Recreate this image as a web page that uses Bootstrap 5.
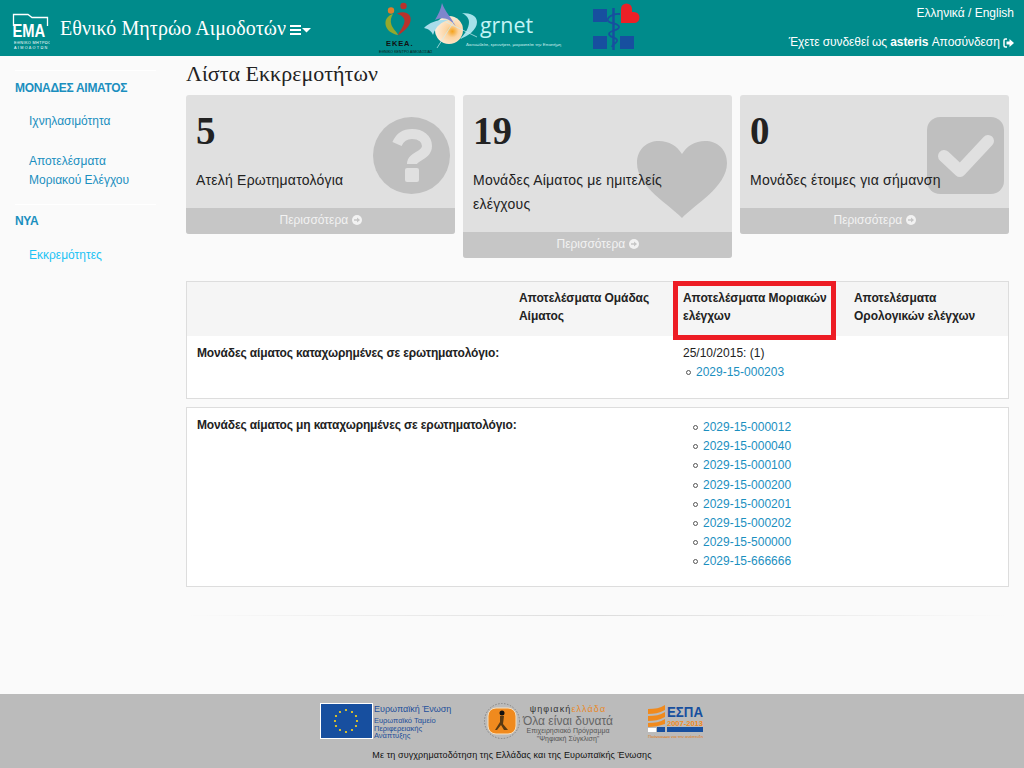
<!DOCTYPE html>
<html lang="el"><head><meta charset="utf-8"><title>Λίστα Εκκρεμοτήτων</title>
<link rel="stylesheet" href="https://cdn.jsdelivr.net/npm/bootstrap@5.3.0/dist/css/bootstrap.min.css">
<style>
html,body{height:100%}
body{background:#fafafa;font-family:"Liberation Sans",Arial,sans-serif;font-size:12px;color:#222;line-height:19px;width:1024px;height:768px;overflow:hidden}
a{text-decoration:none;color:#1b8fbf}
.topbar{height:56px;background:#008b8b;color:#fff}
.brand-area{width:372px;padding-left:12px}
.ema-logo{flex:none;display:block;margin-top:10px}
.brand-title{font-family:"Liberation Serif",serif;font-size:20px;line-height:24px;margin-left:10px;margin-top:16px;color:#fff;letter-spacing:.08px;height:24px}
.brand-caret{margin-left:4px;margin-top:3px}
.logo-area{width:268px}
.top-right{flex:1;padding:6px 10px 0 0;text-align:right;color:#fff;font-size:12px;line-height:15px}
.top-right a{color:#fff}
.top-line2{margin-top:14px;letter-spacing:-.08px}
.wrap{height:638px}
.side{width:186px;flex:none;padding:14px 30px 0 15px}
.side hr{margin:0;border:0;border-top:1px solid #fff;opacity:1}
.side-head{font-weight:700;color:#1b8fbf;line-height:18px;margin-top:8px;letter-spacing:-.3px}
.side-head-two{margin-top:7px}
.side-link{display:block;padding-left:14px;line-height:19px}
.side-link-a{margin-top:15px}
.side-link-b{margin-top:21px}
.side-link-c{margin-top:16px}
.side-link.now{color:#1cc3f5}
.side hr.side-rule{margin-top:14px}
.main-area{width:823px;flex:none}
.page-title{font-family:"Liberation Serif",serif;font-size:22px;line-height:26px;margin:5px 0 8px;font-weight:400;color:#222}
.stat{background:#e0e0e0;border-radius:3px;width:269px;overflow:hidden;position:relative}
.stat-body{padding:9px 10px 16px;position:relative}
.stat-num{font-family:"Liberation Serif",serif;font-weight:700;font-size:39px;line-height:54px;color:#222;margin-bottom:10px}
.stat-text{font-size:14px;line-height:24px;color:#222;position:relative;width:215px;letter-spacing:.22px}
.stat-foot{display:block;background:#c6c6c6;color:#f2f2f2;text-align:center;height:26px;line-height:25px;position:relative}
.stat-ico{position:absolute;right:5px;top:22px;width:77px;height:77px}
.ico-heart{top:46px;width:90px}
.more-ico{vertical-align:-1px}
.box{background:#fff;border:1px solid #ddd}
.box-one{margin-top:23px;height:118px}
.box-two{margin-top:8px;height:180px}
.cells{display:grid;grid-template-columns:321px 165px 170px 1fr}
.headcells{background:#f5f5f5;height:54px;font-weight:700;line-height:18px;letter-spacing:-.06px}
.headcells>div{padding:7px 8px 0 11px}
.headcells>div:nth-child(3){position:relative;padding-left:10px}
.redbox{position:absolute;left:0;top:-1px;width:163px;height:59px;border:5px solid #ed1c24}
.rowcells{padding-top:8px}
.rowcells>div{padding-left:10px}
.rowcells>div:first-child{font-weight:700;white-space:nowrap;letter-spacing:-.14px}
.codes{list-style:none;margin:0;padding:0}
.codes-wide{padding-left:7px;margin-top:2px}
.codes li{line-height:19.2px}
.codes li::before{content:"";display:inline-block;width:5px;height:5px;border:1px solid #555;border-radius:50%;margin:0 5px 1px 3px}
.grad-line{height:1px;margin-top:28px;background:linear-gradient(90deg,#fafafa,#ddd 50%,#fafafa)}
.foot{height:74px;background:#bbb}
.foot-logos{height:56px;padding-top:9px}
.foot-svg{flex:none;display:block}
.flag-svg{margin-right:1px}
.dgt-svg{margin-left:19px}
.espa-svg{margin-left:31px;margin-top:-1px}
.foot-note{font-size:9px;line-height:12px;color:#111;text-align:center;margin-top:-1px;letter-spacing:.1px}
.eu-text{font-size:7.5px;line-height:7.700px;color:#1e4f9a;width:90px;white-space:nowrap}
.eu-text b{font-size:9px;font-weight:400;display:block;margin-bottom:3px;line-height:10px;margin-top:1px}
.digital{text-align:center;color:#555;width:94px;white-space:nowrap}
.digital .dg1{font-size:9px;color:#333;letter-spacing:1.1px;line-height:12px}
.digital .dg1 i{color:#e8892a;font-style:normal}
.digital .dg2{font-size:12px;line-height:12px;color:#666}
.digital .dg3{font-size:7px;line-height:8px}
</style></head><body>
<header class="topbar d-flex">
  <div class="brand-area d-flex align-items-start">
    <svg class="ema-logo" width="38" height="40" viewBox="12 10 38 40"><path d="M13.500 26V14.500H28l4 3h15.500V26" fill="none" stroke="#fff" stroke-width="1.300"/><text transform="translate(12.500 37) scale(.82 1)" font-family="Liberation Sans" font-weight="700" font-size="18" fill="#fff">EMA</text><text x="14" y="44" font-family="Liberation Sans" font-size="3.800" fill="#fff" letter-spacing=".4">ΕΘΝΙΚΟ ΜΗΤΡΩΟ</text><text x="14" y="48.500" font-family="Liberation Sans" font-size="3.800" fill="#fff" letter-spacing="1.300">ΑΙΜΟΔΟΤΩΝ</text></svg>
    <div class="brand-title d-flex align-items-center">Εθνικό Μητρώο Αιμοδοτών
      <svg class="brand-caret" width="21" height="10" viewBox="0 0 21 10"><path d="M0 0h11v2H0zM0 4h11v2H0zM0 8h11v2H0z" fill="#fff"/><path d="M12 3h9l-4.500 4.500z" fill="#fff"/></svg>
    </div>
  </div>
  <div class="logo-area">
    <svg class="d-block" width="268" height="56" viewBox="372 0 268 56">
      <circle cx="403.500" cy="6" r="3.200" fill="#b8322c"/><circle cx="391" cy="10.500" r="3.200" fill="#e07f2a"/>
      <path d="M397 13.500c5-2.500 11-1.500 13 2.500 2 5-1 10-4 13-3 3-6 5-8 6.500 1-4 6-9 6.500-14 .3-4-3-6-7.500-8z" fill="#b8322c"/>
      <path d="M393 14c-4 1-7 4-7.500 8-.5 4 2 8 5 10 3 2 6 3 7.500 3-1-3-5-6-6.500-10-1.500-4-.5-8 1.500-11z" fill="#94a82c"/>
      <text x="386" y="46" font-family="Liberation Sans" font-weight="700" font-size="7.500" fill="#111" letter-spacing=".9">ΕΚΕΑ.</text>
      <text x="379" y="52.500" font-family="Liberation Sans" font-size="3.500" fill="#111" letter-spacing=".1">ΕΘΝΙΚΟ ΚΕΝΤΡΟ ΑΙΜΟΔΟΣΙΑΣ</text>
      <defs><radialGradient id="sun" cx=".62" cy=".55" r=".62"><stop offset="0" stop-color="#f4a21a"/><stop offset=".35" stop-color="#fbd3a0"/><stop offset="1" stop-color="#fdeedd"/></radialGradient></defs>
      <circle cx="449" cy="30" r="14" fill="url(#sun)"/>
      <path d="M442 3c3 9 10 15 14 24-5-8-13-11-21-7 3-5 6-11 7-17z" fill="#7e86cc"/>
      <path d="M424 28c6-6 15-9 25-8-8 2-13 6-16 15-1-3-4-6-9-7z" fill="#a9dcea"/>
      <path d="M462 13c9 0 15 3 15 9 0 8-9 14-17 17 5-5 9-11 9-17 0-4-3-7-7-9z" fill="#a5e2ea"/>
      <path d="M437 48l19-30M446 22l31 15" stroke="#cfeef2" stroke-width=".7"/>
      <text x="480" y="33" font-family="Open Sans,Liberation Sans" font-size="22" fill="#c4f4f6" textLength="53" lengthAdjust="spacingAndGlyphs">grnet</text>
      <text x="466" y="46" font-family="Liberation Sans" font-size="4.300" fill="#d0f0f0">Δικτυωθείτε, ερευνήστε, μοιραστείτε την Επιστήμη</text>
      <path d="M593 9h14v13h-14zM593 36h14v13h-14zM620 36h14v13h-14z" fill="#174f9f"/>
      <path d="M621 23V9a5.500 5.500 0 0 1 11 0v3h2a5.500 5.500 0 0 1 0 11z" fill="#ec2027"/>
      <path d="M613.500 8v42" stroke="#174f9f" stroke-width="2.500"/>
      <path d="M620 14c-7-1-14 4-12 7 2 3 11 2 11 6 0 4-10 3-10 7 0 4 9 3 8 7-1 3-5 3-5 6" fill="none" stroke="#174f9f" stroke-width="1.800"/>
    </svg>
  </div>
  <div class="top-right">
    <div>Ελληνικά / English</div>
    <div class="top-line2">Έχετε συνδεθεί ως <b>asteris</b> <a href="#">Αποσύνδεση
      <svg width="11" height="10" viewBox="0 0 11 10"><path d="M4 1H2.500C1.500 1 1 1.600 1 2.500v5C1 8.400 1.500 9 2.500 9H4" fill="none" stroke="#fff" stroke-width="1.500"/><path d="M3.500 3.500H6.500V1L11 5 6.500 9V6.500H3.500z" fill="#fff"/></svg></a></div>
  </div>
</header>
<div class="wrap d-flex">
  <nav class="side">
    <hr>
    <div class="side-head">ΜΟΝΑΔΕΣ ΑΙΜΑΤΟΣ</div>
    <a class="side-link side-link-a" href="#">Ιχνηλασιμότητα</a>
    <a class="side-link side-link-b" href="#">Αποτελέσματα<br>Μοριακού Ελέγχου</a>
    <hr class="side-rule">
    <div class="side-head side-head-two">ΝΥΑ</div>
    <a class="side-link side-link-c now" href="#">Εκκρεμότητες</a>
  </nav>
  <main class="main-area">
    <h1 class="page-title">Λίστα Εκκρεμοτήτων</h1>
    <div class="d-flex align-items-start gap-2">
      <div class="stat">
        <svg class="stat-ico" viewBox="0 0 77 77"><circle cx="38.500" cy="38.500" r="38.500" fill="#bfbfbf"/><path d="M24 27c3-7 9-10 15-10 9 0 15 5 15 12 0 10-15 10-15 18" fill="none" stroke="#e0e0e0" stroke-width="10" stroke-linejoin="round"/><rect x="32" y="51" width="14" height="14" rx="2" fill="#e0e0e0"/></svg>
        <div class="stat-body"><div class="stat-num">5</div><div class="stat-text">Ατελή Ερωτηματολόγια</div></div>
        <a class="stat-foot" href="#">Περισσότερα <svg class="more-ico" width="10" height="10" viewBox="0 0 10 10"><circle cx="5" cy="5" r="5" fill="#f2f2f2"/><path d="M2 4.200h3V2.500L8 5 5 7.500V5.800H2z" fill="#c6c6c6"/></svg></a>
      </div>
      <div class="stat">
        <svg class="stat-ico ico-heart" viewBox="0 0 90 77"><path d="M45 77C33 64 0 46 0 22 0 8 10 0 22 0c10 0 18 5 23 13C50 5 58 0 68 0c12 0 22 8 22 22 0 24-33 42-45 55z" fill="#bfbfbf"/></svg>
        <div class="stat-body"><div class="stat-num">19</div><div class="stat-text">Μονάδες Αίματος με ημιτελείς ελέγχους</div></div>
        <a class="stat-foot" href="#">Περισσότερα <svg class="more-ico" width="10" height="10" viewBox="0 0 10 10"><circle cx="5" cy="5" r="5" fill="#f2f2f2"/><path d="M2 4.200h3V2.500L8 5 5 7.500V5.800H2z" fill="#c6c6c6"/></svg></a>
      </div>
      <div class="stat">
        <svg class="stat-ico" viewBox="0 0 77 77"><rect width="77" height="77" rx="13" fill="#bfbfbf"/><path d="M17 39l16 15 28-30" fill="none" stroke="#e0e0e0" stroke-width="12" stroke-linejoin="round" stroke-linecap="round"/></svg>
        <div class="stat-body"><div class="stat-num">0</div><div class="stat-text">Μονάδες έτοιμες για σήμανση</div></div>
        <a class="stat-foot" href="#">Περισσότερα <svg class="more-ico" width="10" height="10" viewBox="0 0 10 10"><circle cx="5" cy="5" r="5" fill="#f2f2f2"/><path d="M2 4.200h3V2.500L8 5 5 7.500V5.800H2z" fill="#c6c6c6"/></svg></a>
      </div>
    </div>
    <div class="box box-one">
      <div class="cells headcells"><div></div><div>Αποτελέσματα Ομάδας Αίματος</div><div>Αποτελέσματα Μοριακών ελέγχων<span class="redbox"></span></div><div>Αποτελέσματα Ορολογικών ελέγχων</div></div>
      <div class="cells rowcells"><div>Μονάδες αίματος καταχωρημένες σε ερωτηματολόγιο:</div><div></div><div>25/10/2015: (1)<ul class="codes"><li><a href="#">2029-15-000203</a></li></ul></div><div></div></div>
    </div>
    <div class="box box-two">
      <div class="cells rowcells"><div>Μονάδες αίματος μη καταχωρημένες σε ερωτηματολόγιο:</div><div></div><div><ul class="codes codes-wide"><li><a href="#">2029-15-000012</a></li><li><a href="#">2029-15-000040</a></li><li><a href="#">2029-15-000100</a></li><li><a href="#">2029-15-000200</a></li><li><a href="#">2029-15-000201</a></li><li><a href="#">2029-15-000202</a></li><li><a href="#">2029-15-500000</a></li><li><a href="#">2029-15-666666</a></li></ul></div><div></div></div>
    </div>
    <div class="grad-line"></div>
  </main>
</div>
<footer class="foot">
  <div class="foot-logos d-flex justify-content-center align-items-start">
    <svg class="foot-svg flag-svg" width="53" height="36" viewBox="0 0 53 36"><rect x=".5" y=".5" width="52" height="35" fill="#174f9f" stroke="#fff"/><g fill="#ffd617"><circle cx="26" cy="7" r="1.100"/><circle cx="32" cy="9" r="1.100"/><circle cx="36" cy="13" r="1.100"/><circle cx="37" cy="18" r="1.100"/><circle cx="36" cy="23" r="1.100"/><circle cx="32" cy="27" r="1.100"/><circle cx="26" cy="29" r="1.100"/><circle cx="20" cy="27" r="1.100"/><circle cx="16" cy="23" r="1.100"/><circle cx="15" cy="18" r="1.100"/><circle cx="16" cy="13" r="1.100"/><circle cx="20" cy="9" r="1.100"/></g></svg>
    <div class="eu-text"><b>Ευρωπαϊκή Ένωση</b>Ευρωπαϊκό Ταμείο<br>Περιφερειακής<br>Ανάπτυξης</div>
    <svg class="foot-svg dgt-svg" width="38" height="36" viewBox="0 0 38 36"><circle cx="19" cy="18" r="17.500" fill="none" stroke="#777" stroke-width=".8" stroke-dasharray="1.500 1.500"/><rect x="5" y="5" width="28" height="26" rx="8" fill="#f08a1e" stroke="#f6e0c0"/><circle cx="19" cy="10" r="2.500" fill="#111"/><path d="M17 13h4l-1 8 5 6h-4l-3-5-4 5h-2l5-8z" fill="#5a3a12"/></svg>
    <div class="digital"><div class="dg1">ψηφιακή<i>ελλάδα</i></div><div class="dg2">Όλα είναι δυνατά</div><div class="dg3">Επιχειρησιακό Πρόγραμμα<br>"Ψηφιακή Σύγκλιση"</div></div>
    <svg class="foot-svg espa-svg" width="58" height="36" viewBox="0 0 58 36"><path d="M2 7c7 0 12-1 17-4v5C13 11 8 12 2 12zM2 14c7 0 12-1 17-4v5c-6 3-11 4-17 4zM2 21c7 0 12-1 17-4v5c-6 2-11 3-17 3z" fill="#f08a1e"/><text x="21" y="15" font-family="Liberation Sans" font-weight="700" font-size="14" fill="#174f9f" textLength="36" lengthAdjust="spacingAndGlyphs">ΕΣΠΑ</text><text x="21" y="24" font-family="Liberation Sans" font-weight="700" font-size="8" fill="#f08a1e" textLength="36" lengthAdjust="spacingAndGlyphs">2007-2013</text><rect x="2" y="26" width="8" height="4" fill="#fff"/><rect x="11" y="25" width="8" height="5" fill="#174f9f"/><rect x="21" y="25" width="36" height="5" fill="#174f9f"/><text x="2" y="35.500" font-family="Liberation Sans" font-size="4" fill="#e07a10" textLength="55" lengthAdjust="spacingAndGlyphs">Πρόγραμμα για την ανάπτυξη</text></svg>
  </div>
  <div class="foot-note">Με τη συγχρηματοδότηση της Ελλάδας και της Ευρωπαϊκής Ένωσης</div>
</footer>
</body></html>
